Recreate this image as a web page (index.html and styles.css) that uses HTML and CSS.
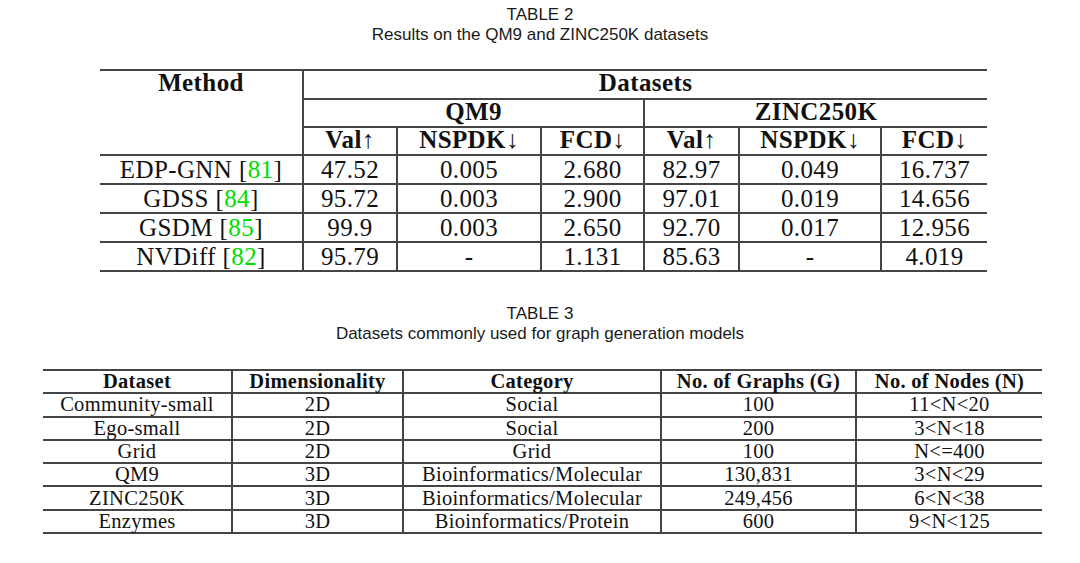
FILE: index.html
```html
<!DOCTYPE html>
<html>
<head>
<meta charset="utf-8">
<link rel="stylesheet" href="styles.css">
</head>
<body>
<div class="caption">
  <div>TABLE 2</div>
  <div>Results on the QM9 and ZINC250K datasets</div>
</div>
<table class="t2">
  <colgroup>
    <col class="c203"><col class="c94"><col class="c144"><col class="c103"><col class="c95"><col class="c142"><col class="c106">
  </colgroup>
  <tr class="h1">
    <th class="first method" rowspan="3">Method</th>
    <th colspan="6">Datasets</th>
  </tr>
  <tr class="h2">
    <th colspan="3">QM9</th>
    <th colspan="3">ZINC250K</th>
  </tr>
  <tr class="h3">
    <th>Val↑</th><th>NSPDK↓</th><th>FCD↓</th><th>Val↑</th><th>NSPDK↓</th><th>FCD↓</th>
  </tr>
  <tr class="d">
    <td class="first">EDP-GNN [<span class="ref">81</span>]</td><td>47.52</td><td>0.005</td><td>2.680</td><td>82.97</td><td>0.049</td><td>16.737</td>
  </tr>
  <tr class="d">
    <td class="first">GDSS [<span class="ref">84</span>]</td><td>95.72</td><td>0.003</td><td>2.900</td><td>97.01</td><td>0.019</td><td>14.656</td>
  </tr>
  <tr class="d">
    <td class="first">GSDM [<span class="ref">85</span>]</td><td>99.9</td><td>0.003</td><td>2.650</td><td>92.70</td><td>0.017</td><td>12.956</td>
  </tr>
  <tr class="d">
    <td class="first">NVDiff [<span class="ref">82</span>]</td><td>95.79</td><td>-</td><td>1.131</td><td>85.63</td><td>-</td><td>4.019</td>
  </tr>
</table>

<div class="caption second">
  <div>TABLE 3</div>
  <div>Datasets commonly used for graph generation models</div>
</div>
<table class="t3">
  <colgroup>
    <col class="c189"><col class="c171"><col class="c258"><col class="c195"><col class="c186">
  </colgroup>
  <tr>
    <th class="first">Dataset</th><th>Dimensionality</th><th>Category</th><th>No. of Graphs (G)</th><th>No. of Nodes (N)</th>
  </tr>
  <tr><td class="first">Community-small</td><td>2D</td><td>Social</td><td>100</td><td>11&lt;N&lt;20</td></tr>
  <tr><td class="first">Ego-small</td><td>2D</td><td>Social</td><td>200</td><td>3&lt;N&lt;18</td></tr>
  <tr><td class="first">Grid</td><td>2D</td><td>Grid</td><td>100</td><td>N&lt;=400</td></tr>
  <tr><td class="first">QM9</td><td>3D</td><td>Bioinformatics/Molecular</td><td>130,831</td><td>3&lt;N&lt;29</td></tr>
  <tr><td class="first">ZINC250K</td><td>3D</td><td>Bioinformatics/Molecular</td><td>249,456</td><td>6&lt;N&lt;38</td></tr>
  <tr><td class="first">Enzymes</td><td>3D</td><td>Bioinformatics/Protein</td><td>600</td><td>9&lt;N&lt;125</td></tr>
</table>
</body>
</html>
```

FILE: styles.css
```css
html, body {
  margin: 0;
  padding: 0;
  background: #ffffff;
  color: #111111;
}

.caption {
  font-family: "Liberation Sans", Arial, sans-serif;
  font-size: 17px;
  line-height: 20px;
  text-align: center;
  padding-top: 5px;
  color: #1a1a1a;
}

.caption.second {
  margin-top: 27px;
}

table {
  border-collapse: collapse;
  table-layout: fixed;
  font-family: "Liberation Serif", "Times New Roman", serif;
  color: #111111;
}

th, td {
  padding: 0;
  text-align: center;
  white-space: nowrap;
  border-left: 2px solid #444444;
  border-bottom: 2px solid #444444;
}

th.first, td.first {
  border-left: none;
}

th {
  font-weight: bold;
}

/* Table 2 */
.t2 {
  margin: 24px 0 0 100px;
  width: 887px;
  font-size: 25px;
  letter-spacing: 0.4px;
  border-top: 2px solid #444444;
}

.t2 .c203 { width: 203px; }
.t2 .c94 { width: 94px; }
.t2 .c144 { width: 144px; }
.t2 .c103 { width: 103px; }
.t2 .c95 { width: 95px; }
.t2 .c142 { width: 142px; }
.t2 .c106 { width: 106px; }

.t2 tr.h1 { height: 29px; }
.t2 tr.h2 { height: 28px; }
.t2 tr.h3 { height: 28px; }
.t2 tr.d { height: 29px; }

.t2 th {
  line-height: 24px;
  vertical-align: top;
}

.t2 td {
  line-height: 26px;
  vertical-align: middle;
}

.t2 .method {
  vertical-align: top;
}

.ref {
  color: #00dd00;
}

/* Table 3 */
.t3 {
  margin: 25px 0 0 43px;
  width: 999px;
  font-size: 20.5px;
  letter-spacing: 0.3px;
  border-top: 2px solid #444444;
}

.t3 .c189 { width: 189px; }
.t3 .c171 { width: 171px; }
.t3 .c258 { width: 258px; }
.t3 .c195 { width: 195px; }
.t3 .c186 { width: 186px; }

.t3 tr { height: 23.3px; }

.t3 th, .t3 td {
  line-height: 21px;
  vertical-align: middle;
}
```
